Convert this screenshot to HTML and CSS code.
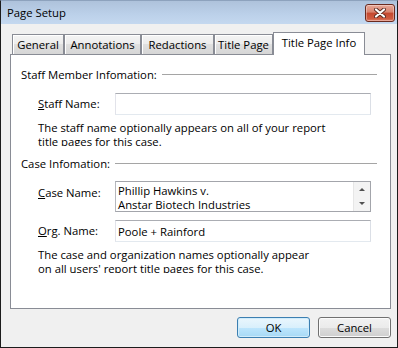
FILE: index.html
```html
<!DOCTYPE html>
<html lang="en">
  <head>
    <meta charset="UTF-8" />
    <title>Page Setup</title>
    <link rel="stylesheet" href="styles.css">
  </head>
  <body>
    <div class="window" role="dialog" aria-label="Page Setup">
      <div class="titlebar">
        <span class="title">Page Setup</span>
        <button class="close" type="button" aria-label="Close">
          <svg width="12" height="10" viewBox="0 0 12 10" aria-hidden="true">
            <path d="M2 1.5 L10 8.5 M10 1.5 L2 8.5" stroke="#5a2a22" stroke-width="4" stroke-linecap="round" fill="none"/>
            <path d="M2 1.5 L10 8.5 M10 1.5 L2 8.5" stroke="#fff" stroke-width="2.2" stroke-linecap="round" fill="none"/>
          </svg>
        </button>
      </div>

      <div class="tabs" role="tablist">
        <div class="tab tab-general" role="tab">General</div>
        <div class="tab tab-annotations" role="tab">Annotations</div>
        <div class="tab tab-redactions" role="tab">Redactions</div>
        <div class="tab tab-title" role="tab">Title Page</div>
        <div class="tab tab-info active" role="tab" aria-selected="true">Title Page Info</div>
      </div>

      <div class="panel" role="tabpanel">
        <div class="group">Staff Member Infomation:</div>
        <div class="field">
          <label for="staff"><u>S</u>taff Name:</label>
          <input class="textbox" id="staff" type="text" value="">
        </div>
        <p class="hint">The staff name optionally appears on all of your report<br>title pages for this case.</p>

        <div class="group">Case Infomation:</div>
        <div class="field field-memo">
          <label><u>C</u>ase Name:</label>
          <div class="memo">
            <div class="memo-text">Phillip Hawkins v.<br>Anstar Biotech Industries</div>
            <div class="scroll" aria-hidden="true">
              <span class="arrow up"></span>
              <span class="arrow down"></span>
            </div>
          </div>
        </div>
        <div class="field field-tight">
          <label for="org"><u>O</u>rg. Name:</label>
          <input class="textbox" id="org" type="text" value="Poole + Rainford">
        </div>
        <p class="hint">The case and organization names optionally appear<br>on all users' report title pages for this case.</p>
      </div>

      <div class="buttons">
        <button class="btn btn-default" type="button">OK</button>
        <button class="btn" type="button">Cancel</button>
      </div>
    </div>
  </body>
</html>
```

FILE: styles.css
```css
/* Base */
:root {
  --face: #f0f0f0;
  --tab-border: #898c95;
  --text: #000;
}
* {
  box-sizing: border-box;
}
body {
  margin: 0;
  font-family: "Open Sans", "Liberation Sans", sans-serif;
  font-size: 11.3px;
  color: var(--text);
  background: #fff;
}

/* Window frame */
.window {
  width: 398px;
  height: 348px;
  border: 1px solid #1c1c1c;
  border-top-color: #8da2bd;
  background: var(--face);
  display: flex;
  flex-direction: column;
}
.titlebar {
  height: 23px;
  flex-shrink: 0;
  display: flex;
  align-items: center;
  justify-content: space-between;
  padding: 0 2px 0 6px;
  background: linear-gradient(#aec2db, #bcd1ea 60%, #c4d8ef);
}
.title {
  line-height: 14px;
}
.close {
  width: 30px;
  height: 18px;
  padding: 0;
  border: 1px solid #6a2a1f;
  border-radius: 3px;
  background: linear-gradient(#e7a898, #d8836f 45%, #c4472f 50%, #cf5b40 85%, #e0806a);
  box-shadow: inset 0 0 0 1px rgb(255 255 255 / 0.35);
  display: flex;
  align-items: center;
  justify-content: center;
}

/* Tabs */
.tabs {
  display: flex;
  align-items: flex-end;
  height: 22px;
  margin: 8px 0 0 11px;
  flex-shrink: 0;
}
.tab {
  height: 20px;
  border: 1px solid var(--tab-border);
  border-bottom: 0;
  padding-top: 2px;
  line-height: 15px;
  text-align: center;
  white-space: nowrap;
  background: linear-gradient(#f4f4f4, #ececec 50%, #e0e0e0 50%, #d6d6d6);
  box-shadow: inset 1px 1px 0 #fff;
}
.tab-general { width: 52px; }
.tab-annotations { width: 77px; }
.tab-redactions { width: 73px; }
.tab-title { width: 59px; }
.tab-info { width: 92px; }
.tab.active {
  height: 23px;
  margin-bottom: -1px;
  padding-top: 2px;
  background: #fff;
  box-shadow: none;
  position: relative;
  z-index: 1;
}

/* Tab page */
.panel {
  height: 255px;
  margin: 0 6px 0 9px;
  padding: 13px 13px 0 10px;
  border: 1px solid var(--tab-border);
  background: #fff;
  flex-shrink: 0;
  line-height: 14px;
}
.group {
  display: flex;
  align-items: center;
  gap: 5px;
  white-space: nowrap;
}
.group::after {
  content: "";
  flex: 1;
  border-top: 1px solid #a5a5a5;
  margin-top: -1px;
}
.group + .field {
  margin-top: 11px;
}
.hint + .group {
  margin-top: 11px;
}
.field {
  display: flex;
  align-items: flex-start;
  padding-left: 17px;
}
.field-memo {
  margin-top: 10px !important;
}
.field-tight {
  margin-top: 8px;
}
.field label {
  width: 77px;
  flex-shrink: 0;
  padding-top: 4px;
}
.field-memo label {
  padding-top: 5px;
}
.textbox {
  width: 256px;
  height: 22px;
  margin: 0;
  padding: 0 2px;
  border: 1px solid;
  border-color: #abadb3 #dbdfe6 #e3e9ef #e2e3ea;
  font: inherit;
  color: var(--text);
  line-height: 20px;
  outline: none;
}
.hint {
  margin: 6px 0 0;
  padding-left: 17px;
  height: 25px;
  overflow: hidden;
  white-space: nowrap;
}

/* Multi-line case name box */
.memo {
  width: 256px;
  height: 31px;
  display: flex;
  border: 1px solid #a3a5ab;
  border-left-color: #b6b8bd;
}
.memo-text {
  flex: 1;
  padding: 2px 2px 0;
  white-space: nowrap;
  overflow: hidden;
}
.scroll {
  width: 17px;
  display: flex;
  flex-direction: column;
  background: #f3f3f3;
  border-left: 1px solid #e6e6e6;
}
.arrow {
  flex: 1;
  display: flex;
  align-items: center;
  justify-content: center;
}
.arrow::before {
  content: "";
  border-left: 3px solid transparent;
  border-right: 3px solid transparent;
}
.arrow.up::before {
  border-bottom: 3px solid #505050;
}
.arrow.down::before {
  border-top: 3px solid #505050;
}

/* Dialog buttons */
.buttons {
  display: flex;
  justify-content: flex-end;
  gap: 8px;
  margin: 8px 6px 0 0;
}
.btn {
  width: 73px;
  height: 21px;
  padding: 0;
  border: 1px solid #707070;
  border-radius: 3px;
  background: linear-gradient(#f2f2f2, #ebebeb 50%, #dddddd 50%, #cfcfcf);
  box-shadow: inset 0 0 0 1px #fbfbfb;
  font: inherit;
  color: var(--text);
  line-height: 17px;
}
.btn-default {
  border-color: #3c7fb1;
  background: linear-gradient(#eaf6fd, #d9f0fc 50%, #bee6fd 50%, #a7d9f5);
  box-shadow: inset 0 0 0 1px #d0ecfb;
}
```
